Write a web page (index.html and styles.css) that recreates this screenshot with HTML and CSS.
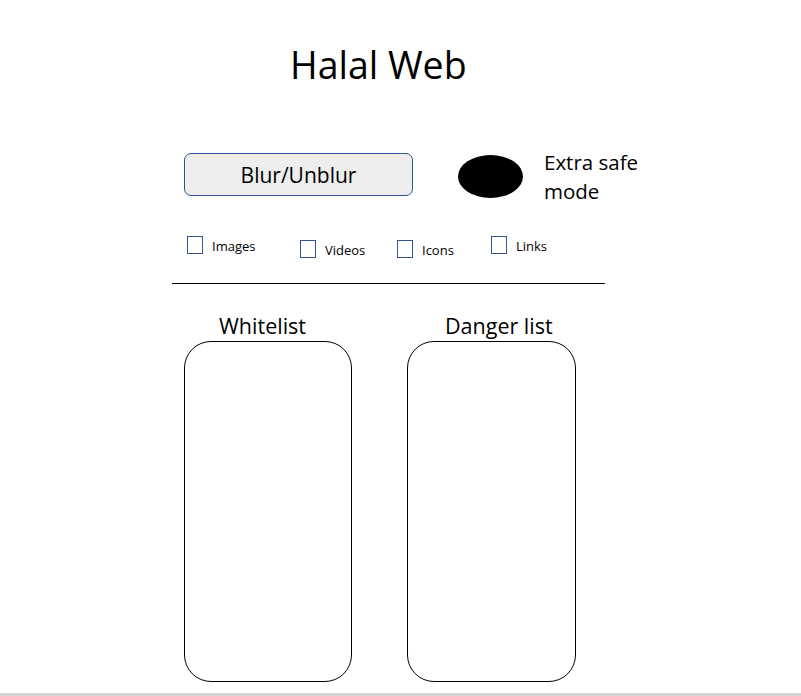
FILE: index.html
```html
<!DOCTYPE html>
<html>
<head>
<meta charset="utf-8">
<link rel="stylesheet" href="styles.css">
</head>
<body>
<div class="page">
  <h1 class="title">Halal Web</h1>
  <div class="controls">
    <button class="blur-btn">Blur/Unblur</button>
    <div class="toggle"></div>
    <div class="safe-label">Extra safe<br>mode</div>
  </div>
  <div class="filters">
    <label class="filter"><span class="box"></span><span class="flabel">Images</span></label>
    <label class="filter low"><span class="box"></span><span class="flabel">Videos</span></label>
    <label class="filter low"><span class="box"></span><span class="flabel">Icons</span></label>
    <label class="filter"><span class="box"></span><span class="flabel">Links</span></label>
  </div>
  <hr class="divider">
  <div class="lists">
    <div class="list">
      <div class="list-title t1">Whitelist</div>
      <div class="list-box"></div>
    </div>
    <div class="list">
      <div class="list-title t2">Danger list</div>
      <div class="list-box"></div>
    </div>
  </div>
</div>
<div class="bottom-bar"></div>
</body>
</html>
```

FILE: styles.css
```css
html, body {
  margin: 0;
  padding: 0;
  background: #fff;
}
body {
  width: 801px;
  height: 696px;
  overflow: hidden;
  position: relative;
  font-family: "Open Sans", "Noto Sans", sans-serif;
  color: #000;
}
.page {
  padding-top: 40px;
  padding-left: 172px;
}
.title {
  margin: 0 0 0 118px;
  font-size: 37.5px;
  font-weight: 400;
  line-height: 50px;
  height: 50px;
}
.controls {
  display: flex;
  align-items: flex-start;
  margin-top: 63px;
  padding-left: 12px;
}
.blur-btn {
  width: 229px;
  height: 43px;
  box-sizing: border-box;
  border: 1px solid #2f5597;
  border-radius: 7px;
  background: #eeeeee;
  font-family: inherit;
  font-size: 21px;
  color: #000;
  padding: 0;
}
.toggle {
  width: 65px;
  height: 43px;
  border-radius: 50%;
  background: #000;
  margin-left: 45px;
  margin-top: 2px;
}
.safe-label {
  margin-left: 21px;
  font-size: 20.5px;
  line-height: 29px;
  margin-top: -5px;
}
.filters {
  display: grid;
  grid-template-columns: 113px 97px 94px auto;
  align-items: start;
  margin-top: 29px;
  padding-left: 15px;
}
.filter {
  display: flex;
  align-items: center;
}
.filter.low {
  margin-top: 4px;
}
.box {
  width: 16px;
  height: 18px;
  box-sizing: border-box;
  border: 1.3px solid #2f5597;
  flex: none;
}
.flabel {
  margin-left: 9px;
  font-size: 13px;
  line-height: 18px;
  margin-top: 2px;
}
.divider {
  margin: 24px 0 0 0;
  width: 433px;
  border: 0;
  border-top: 1px solid #000;
  height: 0;
}
.lists {
  display: flex;
  gap: 55px;
  padding-left: 12px;
  margin-top: 27px;
}
.list-title {
  font-size: 21.5px;
  line-height: 30px;
}
.t1 { padding-left: 35px; }
.t2 { padding-left: 38px; }
.list-box {
  width: 168px;
  height: 341px;
  box-sizing: border-box;
  border: 1px solid #000;
  border-radius: 27px;
}
.list + .list .list-box {
  width: 169px;
}
.bottom-bar {
  position: absolute;
  left: 0;
  bottom: 0;
  width: 801px;
  height: 3px;
  background: #d4d4d4;
}
```
